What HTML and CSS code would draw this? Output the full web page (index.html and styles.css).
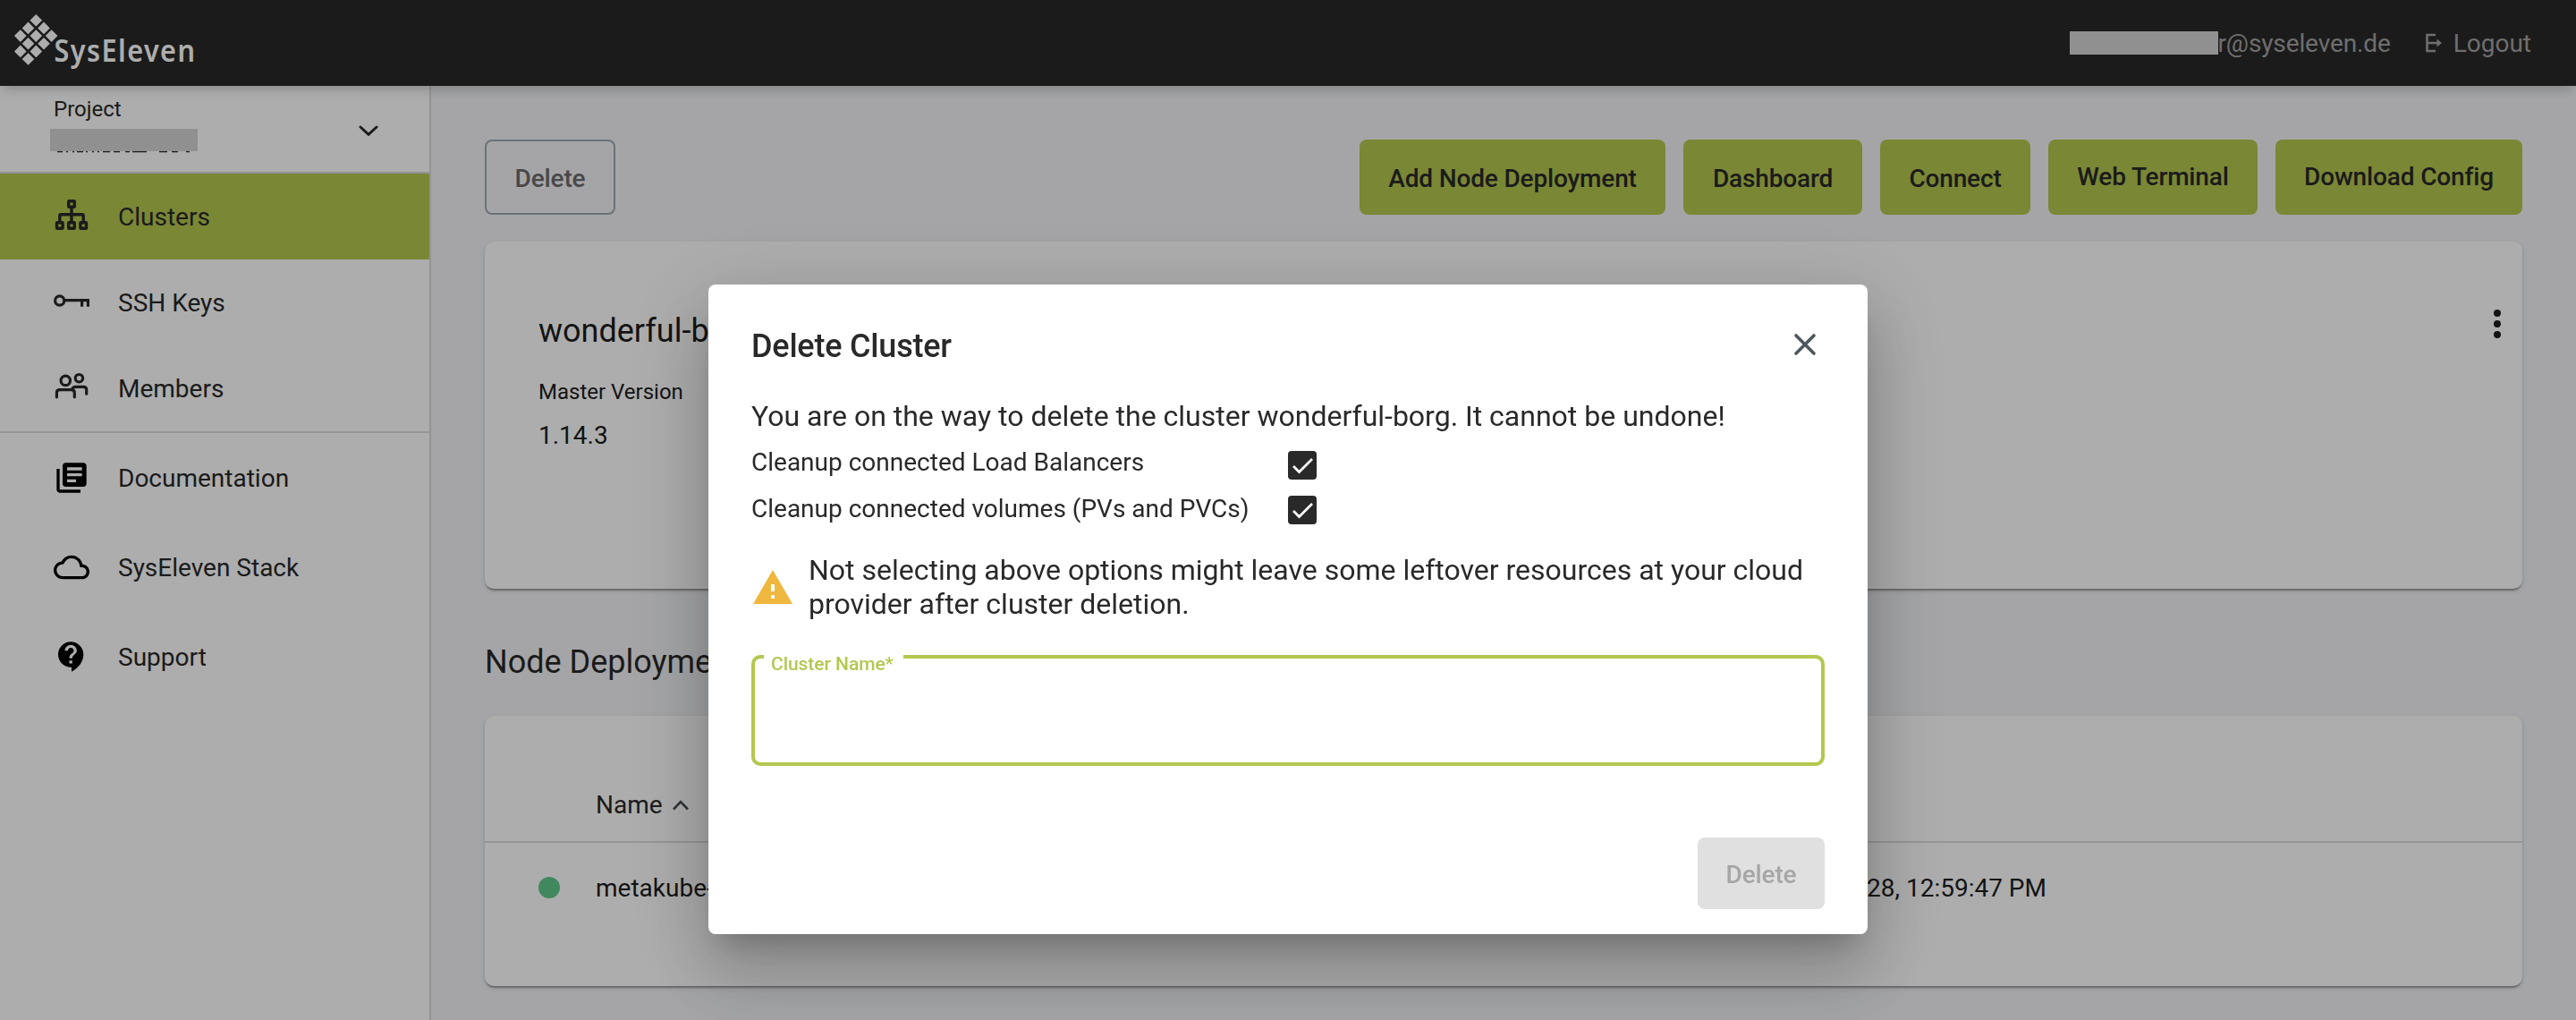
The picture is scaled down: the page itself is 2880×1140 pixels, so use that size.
FILE: index.html
```html
<!DOCTYPE html>
<html lang="en">
<head>
<meta charset="utf-8">
<title>SysEleven – Clusters</title>
<link rel="stylesheet" href="styles.css">
</head>
<body>
<header class="topbar">
  <svg class="logo" width="220" height="96" viewBox="0 0 220 96">
    <defs><path id="tile" d="M0-6.800 6.800 0 0 6.800-6.800 0z"/></defs>
    <g fill="#fff">
      <use href="#tile" x="40.3" y="22.7"/>
      <use href="#tile" x="31.5" y="31.4"/><use href="#tile" x="49" y="31.4"/>
      <use href="#tile" x="22.8" y="40.1"/><use href="#tile" x="40.3" y="40.1"/><use href="#tile" x="57.6" y="40.1"/>
      <use href="#tile" x="31.5" y="48.8"/><use href="#tile" x="49" y="48.8"/>
      <use href="#tile" x="22.8" y="57.4"/><use href="#tile" x="40.3" y="57.4"/>
      <use href="#tile" x="31.5" y="66"/>
    </g>
    <text class="logo-text" transform="translate(60.500 69) scale(.9 1)" textLength="175">SysEleven</text>
  </svg>
  <div class="account">
    <span class="mask mask-mail"></span><span class="mail">r@syseleven.de</span>
    <a class="logout">
      <svg width="18" height="22" viewBox="0 0 18 22"><path d="M11 2H1.500V20H11M1.500 11H15" fill="none" stroke="currentColor" stroke-width="2.600"/><path d="M12.500 6.500 18 11l-5.500 4.500z" fill="currentColor"/></svg>
      <span>Logout</span>
    </a>
  </div>
</header>
<div class="shell">
  <nav class="sidebar">
    <div class="project">
      <div class="project-info">
        <div class="project-label">Project</div>
        <div class="mask mask-project"></div>
        <svg class="project-edge" width="165" height="2" viewBox="0 0 165 2"><path d="M8 .6h6M18 .6h2M25 .6h2M30 .6h7M40 .6h2M47 .6h2M53 .6h2M59 .6h8M71 .6h7M84 .6h5M92 .6h16M122 .6h9M136 .6h7M152 .6h4" stroke="#292929" stroke-width="1.400"/></svg>
      </div>
      <svg width="22" height="12" viewBox="0 0 22 12"><path d="M2 2 11 10.300 20 2" fill="none" stroke="#292929" stroke-width="3" stroke-linecap="round"/></svg>
    </div>
    <a class="item active">
      <svg width="40" height="40" viewBox="0 0 40 40" fill="none" stroke="#292929" stroke-width="3.400"><rect x="16.700" y="2.700" width="6.600" height="6.600" rx=".6"/><rect x="3.500" y="26.700" width="6.600" height="6.600" rx=".6"/><rect x="16.700" y="26.700" width="6.600" height="6.600" rx=".6"/><rect x="29.900" y="26.700" width="6.600" height="6.600" rx=".6"/><path d="M20 10v16M6.800 26v-7q0-1.300 1.300-1.300h23.800q1.300 0 1.300 1.300v7"/></svg>
      <span>Clusters</span></a>
    <a class="item">
      <svg width="40" height="40" viewBox="0 0 40 40" fill="none" stroke="#292929" stroke-width="3.200"><circle cx="6.700" cy="18" r="5.100"/><path d="M12 17.700H38.400V24.700M31.600 18v6.700"/></svg>
      <span>SSH Keys</span></a>
    <a class="item">
      <svg width="40" height="40" viewBox="0 0 40 40" fill="none" stroke="#292929" stroke-width="3.200" stroke-linecap="round"><circle cx="13.300" cy="11.400" r="5.200"/><circle cx="28.400" cy="8.700" r="4.200"/><path d="M3.400 29.800V25q0-3.300 3.300-3.300H20q3.300 0 3.300 3.300v4.800M21 20.300q1-2 3.500-2h8.900q3.300 0 3.300 3.300V26.200"/></svg>
      <span>Members</span></a>
    <div class="group">
      <a class="item tall">
        <svg width="40" height="40" viewBox="0 0 24 24"><path d="M4 6H2v14c0 1.100.9 2 2 2h14v-2H4V6zm16-4H8c-1.100 0-2 .9-2 2v12c0 1.100.9 2 2 2h12c1.100 0 2-.9 2-2V4c0-1.100-.9-2-2-2zm-1 9H9V9h10v2zm-4 4H9v-2h6v2zm4-8H9V5h10v2z"/></svg>
        <span>Documentation</span></a>
      <a class="item tall">
        <svg width="40" height="40" viewBox="0 0 24 24"><path d="M19.350 10.040C18.670 6.590 15.640 4 12 4 9.110 4 6.600 5.640 5.350 8.040 2.340 8.360 0 10.910 0 14c0 3.310 2.690 6 6 6h13c2.760 0 5-2.240 5-5 0-2.640-2.050-4.780-4.650-4.960zM19 18H6c-2.210 0-4-1.790-4-4 0-2.050 1.530-3.760 3.560-3.970l1.070-.11.5-.95C8.080 7.140 9.940 6 12 6c2.620 0 4.880 1.860 5.390 4.430l.3 1.500 1.530.11c1.560.1 2.780 1.410 2.780 2.960 0 1.650-1.350 3-3 3z"/></svg>
        <span>SysEleven Stack</span></a>
      <a class="item tall">
        <svg width="40" height="40" viewBox="0 0 24 24"><path d="M11.500 2C6.810 2 3 5.810 3 10.500S6.810 19 11.500 19h.5v3c4.860-2.340 8-7 8-11.500C20 5.810 16.190 2 11.500 2zm1 14.500h-2v-2h2v2zm0-3.500h-2c0-3.250 3-3 3-5 0-1.100-.9-2-2-2s-2 .9-2 2h-2c0-2.210 1.790-4 4-4s4 1.790 4 4c0 2.500-3 2.750-3 5z"/></svg>
        <span>Support</span></a>
    </div>
  </nav>
  <main class="content">
    <div class="toolbar">
      <button class="btn outline">Delete</button>
      <div class="actions">
        <button class="btn w-add">Add Node Deployment</button>
        <button class="btn w-dash">Dashboard</button>
        <button class="btn w-conn">Connect</button>
        <button class="btn raised w-term">Web Terminal</button>
        <button class="btn raised w-conf">Download Config</button>
      </div>
    </div>
    <section class="card cluster">
      <div>
        <h1 class="cluster-name">wonderful-borg</h1>
        <div class="meta-label">Master Version</div>
        <div class="meta-value">1.14.3</div>
      </div>
      <svg class="more" width="8" height="32" viewBox="0 0 8 32"><circle cx="4" cy="4" r="4"/><circle cx="4" cy="16" r="4"/><circle cx="4" cy="28" r="4"/></svg>
    </section>
    <h2 class="section-title">Node Deployments</h2>
    <section class="card nodes">
      <div class="nodes-head"><span>Name</span><svg width="20" height="12" viewBox="0 0 20 12"><path d="M2 10.500 10 2.200 18 10.500" fill="none" stroke="#454d54" stroke-width="2.600"/></svg></div>
      <div class="nodes-row"><i class="status"></i><span class="node-name">metakube-</span><span class="node-date">28, 12:59:47 PM</span></div>
    </section>
  </main>
</div>
<div class="backdrop">
  <div class="dialog" role="dialog">
    <div class="dialog-head">
      <h3 class="dialog-title">Delete Cluster</h3>
      <svg width="26" height="26" viewBox="0 0 26 26"><path d="M3 3 23 23M23 3 3 23" stroke="#4d565d" stroke-width="3.600" stroke-linecap="round"/></svg>
    </div>
    <p class="lead">You are on the way to delete the cluster wonderful-borg. It cannot be undone!</p>
    <div class="option"><span>Cleanup connected Load Balancers</span>
      <svg class="box" width="32" height="32" viewBox="0 0 32 32"><rect width="32" height="32" rx="4" fill="#292929"/><path d="M6 17 12.500 23.500 27 9" fill="none" stroke="#fff" stroke-width="2.800"/></svg></div>
    <div class="option second"><span>Cleanup connected volumes (PVs and PVCs)</span>
      <svg class="box" width="32" height="32" viewBox="0 0 32 32"><rect width="32" height="32" rx="4" fill="#292929"/><path d="M6 17 12.500 23.500 27 9" fill="none" stroke="#fff" stroke-width="2.800"/></svg></div>
    <div class="warning">
      <svg width="44" height="38" viewBox="1 2 22 19"><path d="M1 21h22L12 2 1 21zm12-3h-2v-2h2v2zm0-4h-2v-4h2v4z" fill="#efb73e"/></svg>
      <p>Not selecting above options might leave some leftover resources at your cloud provider after cluster deletion.</p>
    </div>
    <fieldset class="field"><legend><span>Cluster Name*</span></legend></fieldset>
    <button class="btn disabled">Delete</button>
  </div>
</div>
</body>
</html>
```
FILE: styles.css
```css
* { box-sizing: border-box; }
body, h1, h2, h3, p { margin: 0; }
body {
  width: 2880px;
  height: 1140px;
  overflow: hidden;
  background: #f3f4f7;
  color: #292929;
  font: 400 28px/32px Roboto, "Liberation Sans", sans-serif;
}
svg { display: block; flex: none; }

.topbar {
  position: relative;
  z-index: 1;
  display: flex;
  justify-content: space-between;
  height: 96px;
  padding-right: 50px;
  background: #292929;
  box-shadow: 0 8px 12px -4px rgba(0, 0, 0, .2);
}
.logo-text { font: 600 34px "Noto Sans", sans-serif; fill: #fff; }
.account { display: flex; align-items: center; color: #a3a3a3; }
.account span { padding-top: 2px; }
.mask { display: block; background: #d5d5d5; }
.mask-mail { width: 166px; height: 26px; }
.mail { letter-spacing: -.12px; }
.logout { display: flex; align-items: center; gap: 13px; margin-left: 39px; }

.shell { display: flex; height: 1044px; }
.sidebar { width: 482px; border-right: 2px solid #d9dadd; background: #fff; }
.project {
  display: flex;
  align-items: center;
  justify-content: space-between;
  height: 98px;
  padding: 0 57px 0 56px;
  border-bottom: 2px solid #d9d9dd;
}
.project-info { padding-bottom: 9px; }
.project > svg { margin-top: 3px; }
.project-label { margin: 0 0 8px 4px; font-size: 24px; line-height: 28px; }
.mask-project { width: 165px; height: 25px; }
.item { display: flex; align-items: center; gap: 32px; height: 96px; padding-left: 60px; }
.item span { padding-top: 2px; }
.item.tall { height: 100px; }
.active { background: #b4c74e; }
.group { border-top: 2px solid #dcdcdc; }

.content { flex: 1; padding: 60px 60px 0; }
.toolbar { display: flex; justify-content: space-between; margin-bottom: 30px; }
.actions { display: flex; gap: 20px; }
.btn {
  height: 84px;
  padding: 3px 0 0;
  border: 0;
  border-radius: 8px;
  background: #b4c74e;
  color: #292929;
  font: 500 28px/32px Roboto, "Liberation Sans", sans-serif;
  letter-spacing: -.15px;
}
.raised { padding: 0 0 1px; }
.w-add { width: 342px; }
.w-dash { width: 200px; }
.w-conn { width: 168px; }
.w-term { width: 234px; }
.w-conf { width: 276px; }
.outline { width: 146px; border: 2px solid #9ca9b3; background: none; color: #6a6a6a; }

.card {
  border-radius: 10px;
  background: #fff;
  box-shadow: 0 4px 2px -2px rgba(0, 0, 0, .2), 0 2px 2px rgba(0, 0, 0, .14), 0 2px 6px rgba(0, 0, 0, .12);
}
.cluster { display: flex; justify-content: space-between; height: 388px; padding: 76px 24px 0 60px; color: #1c1c1c; }
.cluster-name { font-size: 36px; font-weight: 400; line-height: 48px; }
.meta-label { margin-top: 30px; font-size: 24px; line-height: 28px; }
.meta-value { margin-top: 19px; }
.more { fill: #1c1c1c; }
.section-title { margin: 58px 0 36px; font-size: 36px; font-weight: 400; line-height: 48px; }
.nodes { height: 302px; }
.nodes-head {
  display: flex;
  align-items: center;
  gap: 10px;
  height: 142px;
  padding: 60px 0 0 124px;
  border-bottom: 2px solid #dcdcdc;
}
.nodes-row { display: flex; align-items: center; height: 100px; padding-left: 60px; color: #1c1c1c; }
.nodes-row span { padding-top: 2px; }
.status { width: 24px; height: 24px; margin-right: 40px; border-radius: 50%; background: #61c98c; }
.node-name { width: 1421px; }

.backdrop {
  position: fixed;
  inset: 0;
  z-index: 2;
  display: flex;
  justify-content: center;
  align-items: flex-start;
  padding-top: 318px;
  background: rgba(0, 0, 0, .32);
}
.dialog {
  display: flex;
  flex-direction: column;
  width: 1296px;
  height: 726px;
  padding: 48px 48px 28px;
  border-radius: 8px;
  background: #fff;
  box-shadow: 0 22px 30px -14px rgba(0, 0, 0, .2), 0 48px 76px 6px rgba(0, 0, 0, .14), 0 18px 92px 16px rgba(0, 0, 0, .12);
}
.dialog-head { display: flex; align-items: center; justify-content: space-between; height: 38px; padding-right: 9px; }
.dialog-title { padding-top: 3px; font-size: 36px; font-weight: 500; line-height: 38px; letter-spacing: -.2px; }
.lead { margin-top: 42px; font-size: 32px; line-height: 38px; }
.option { display: grid; grid-template-columns: 600px 32px; align-items: start; height: 50px; margin-top: 16px; }
.option span { padding-top: 1px; }
.option .box { margin-top: 4px; }
.second { margin-top: 0; }
.second span { padding-top: 3px; }
.warning { display: flex; align-items: center; gap: 18px; margin-top: 18px; padding-left: 2px; font-size: 32px; line-height: 38px; }
.warning p { width: 1130px; }
.field {
  height: 134px;
  margin: 28px 0 0;
  padding: 0;
  border: 4px solid #b4c74e;
  border-radius: 10px;
}
.field legend { width: 156px; height: 24px; margin-left: 10px; padding-left: 8px; color: #b4c74e; font-size: 21px; font-weight: 500; line-height: 24px; letter-spacing: -.05px; white-space: nowrap; }
.field legend span { position: relative; top: 8px; }
.disabled { align-self: flex-end; width: 142px; height: 80px; margin-top: auto; background: #e0e0e0; color: #a6a6a6; }
```
